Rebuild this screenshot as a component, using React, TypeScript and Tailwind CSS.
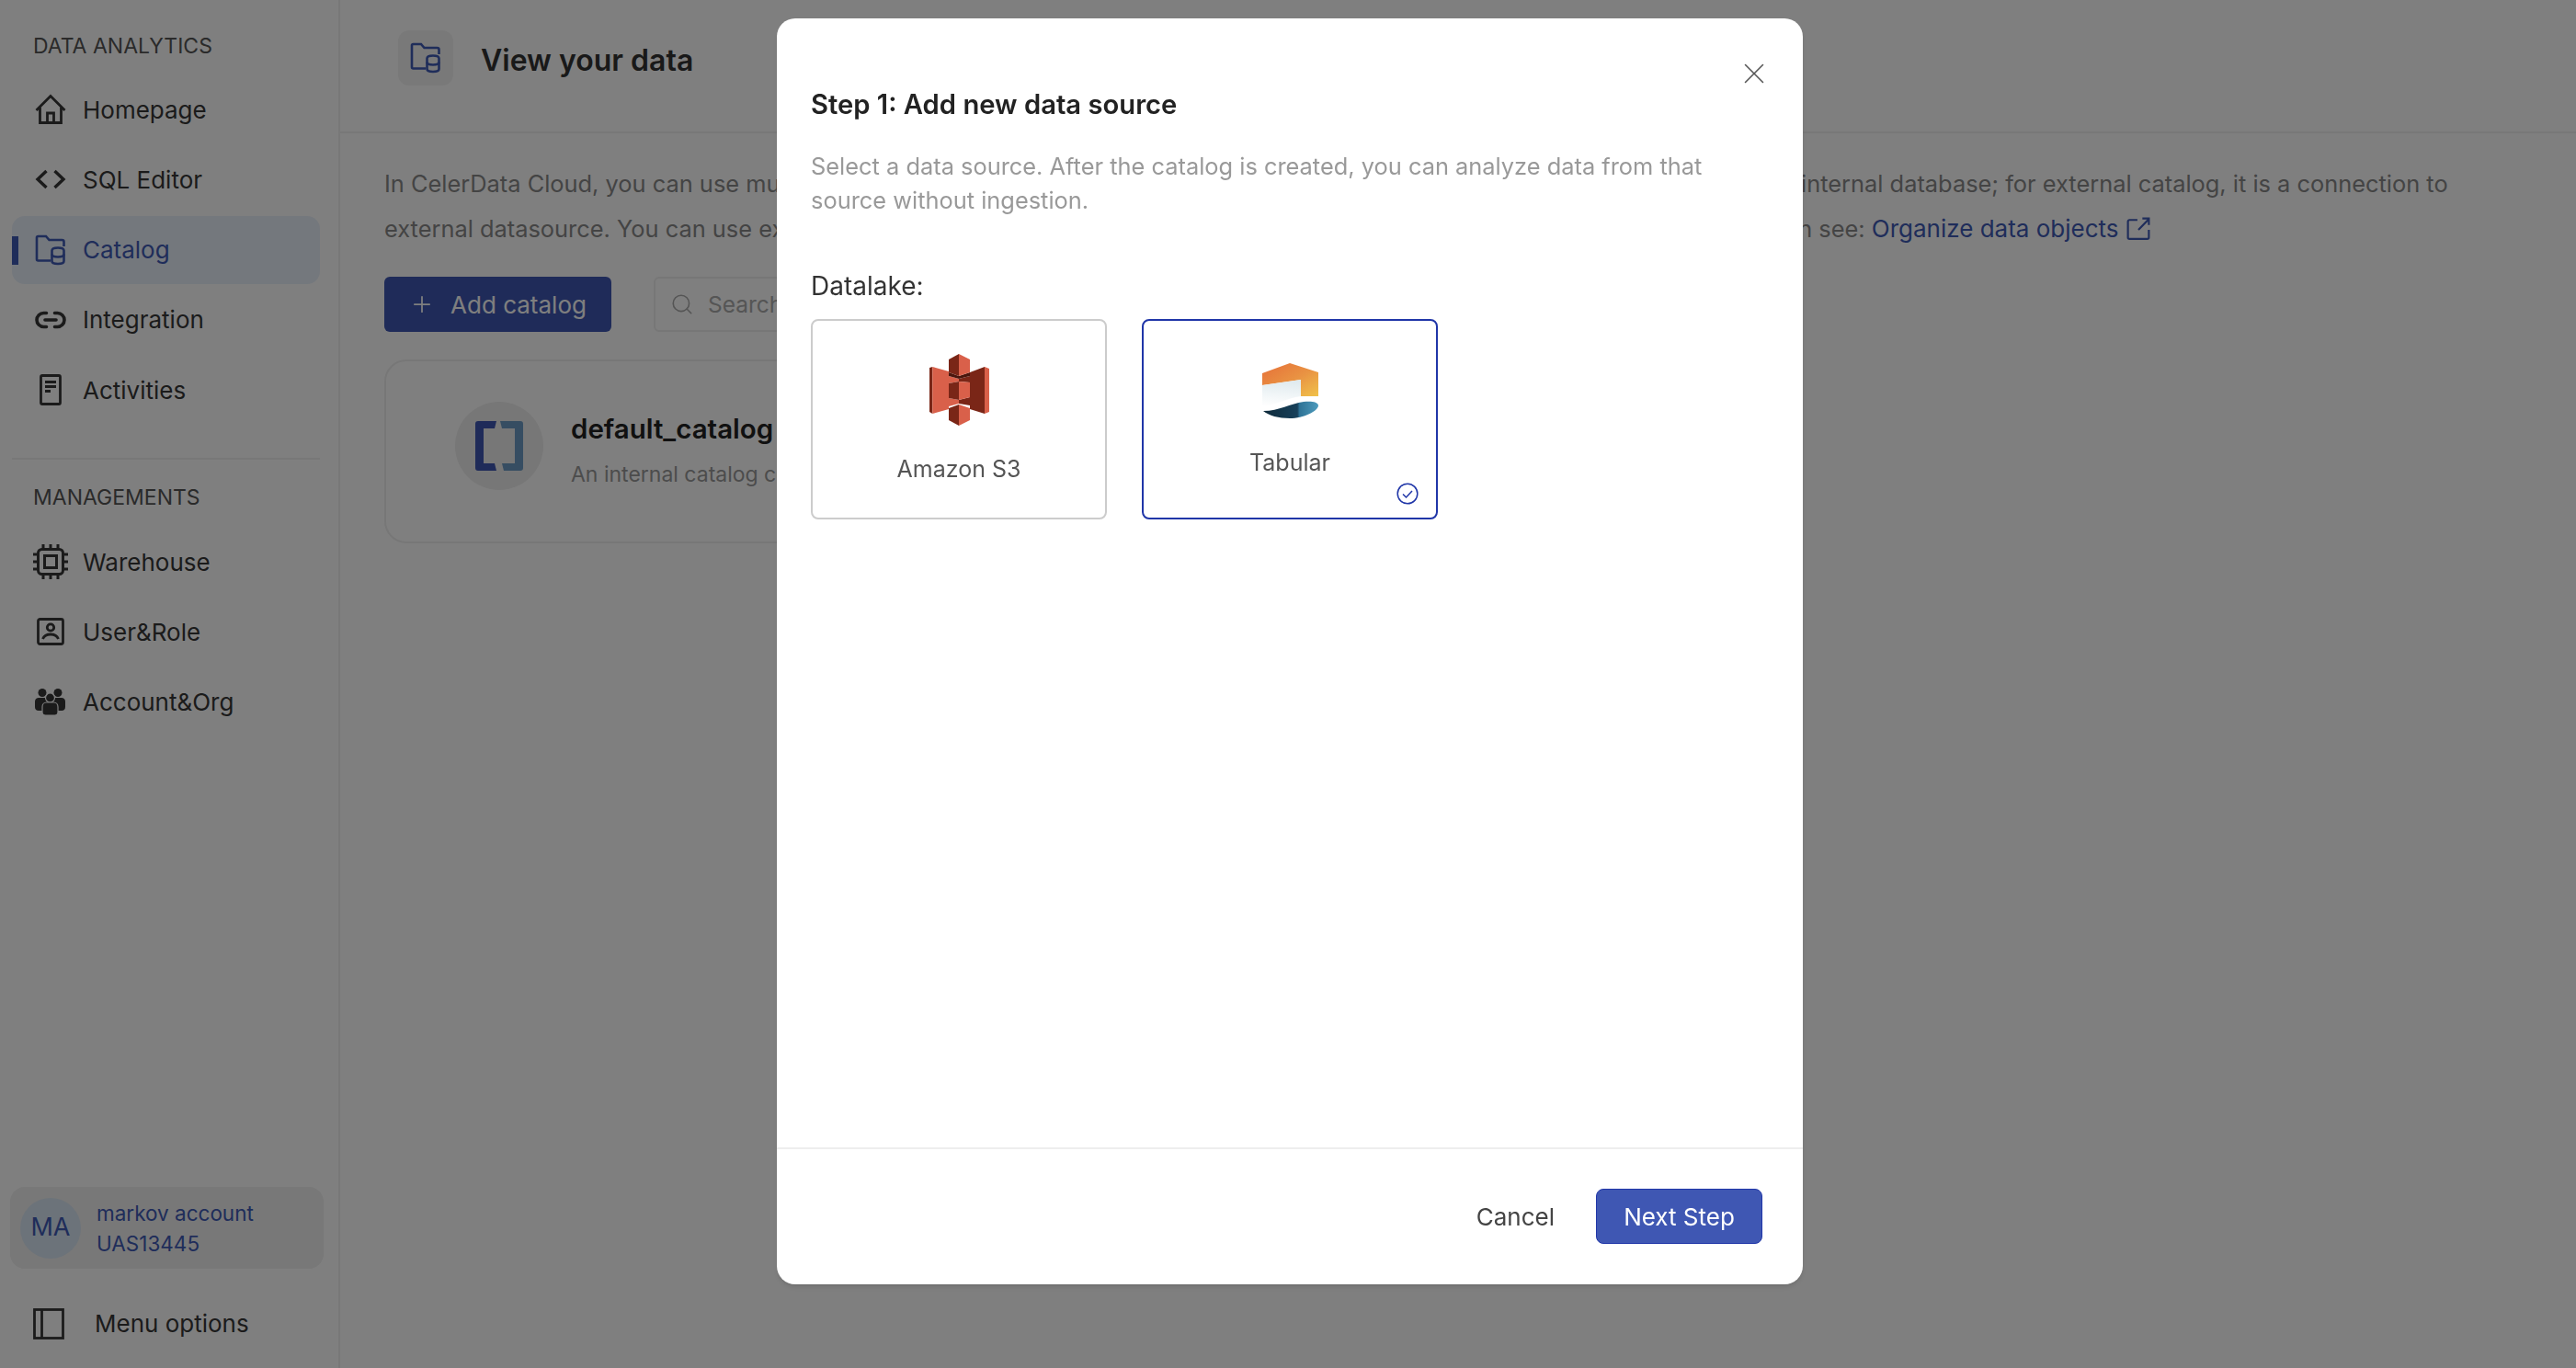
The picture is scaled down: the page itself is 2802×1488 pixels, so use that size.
import { Link2, Plus, Search, X } from 'lucide-react';
import type { ReactNode } from 'react';

function HomeIcon() {
  return (
    <svg viewBox="0 0 34 34" className="h-[34px] w-[34px]" fill="none" stroke="currentColor" strokeWidth="2.8">
      <path d="M1.500 18 17 2.500 32.500 18" />
      <path d="M5.500 15v16.500h23V15" />
      <path d="M13.500 31.500V21h7v10.500" />
    </svg>
  );
}

function CodeIcon() {
  return (
    <svg viewBox="0 0 34 34" className="h-[34px] w-[34px]" fill="none" stroke="currentColor" strokeWidth="3.400">
      <path d="M12.500 8 3 17l9.500 9" />
      <path d="M21.500 8 31 17l-9.500 9" />
    </svg>
  );
}

function CatalogIcon() {
  return (
    <svg viewBox="0 0 34 34" className="h-[34px] w-[34px]" fill="none" stroke="currentColor" strokeWidth="2.600">
      <path d="M17 28.500H3.500A1.500 1.500 0 0 1 2 27V3.500A1.500 1.500 0 0 1 3.500 2h8.500l3.500 4h14a2 2 0 0 1 2 2v5" />
      <path d="M18.500 17.500c0-1.800 3-3 6.500-3s6.500 1.200 6.500 3v11.500c0 1.800-3 3-6.500 3s-6.500-1.200-6.500-3z" />
      <path d="M18.500 21.500c0 1.800 3 3 6.500 3s6.500-1.200 6.500-3" />
    </svg>
  );
}

function ActivitiesIcon() {
  return (
    <svg viewBox="0 0 34 34" className="h-[34px] w-[34px]" fill="none" stroke="currentColor" strokeWidth="2.800">
      <rect x="6.500" y="1.500" width="21" height="31" rx="1.500" />
      <path d="M11 8.500h12M11 13.500h12M11 18.500h6" />
    </svg>
  );
}

function ChipIcon() {
  return (
    <svg viewBox="0 0 40 40" className="h-[40px] w-[40px] shrink-0" fill="none" stroke="currentColor" strokeWidth="3">
      <rect x="6.500" y="6.500" width="27" height="27" rx="4" />
      <rect x="13.500" y="13.500" width="13" height="13" />
      <path d="M12 1v5M20 1v5M28 1v5M12 34v5M20 34v5M28 34v5M1 12h5M1 20h5M1 28h5M34 12h5M34 20h5M34 28h5" />
    </svg>
  );
}

function UserRoleIcon() {
  return (
    <svg viewBox="0 0 30 30" className="h-[30px] w-[30px]" fill="none" stroke="currentColor" strokeWidth="2.800">
      <rect x="1.500" y="1.500" width="27" height="27" rx="2" />
      <circle cx="15" cy="10.500" r="3.700" />
      <path d="M6.500 23c1.500-3.500 4.500-5 8.500-5s7 1.500 8.500 5" />
    </svg>
  );
}

function GroupIcon() {
  return (
    <svg viewBox="0 0 33 29" className="h-[29px] w-[33px]" fill="currentColor">
      <circle cx="8" cy="4.500" r="4.500" />
      <circle cx="25" cy="4.500" r="4.500" />
      <path d="M0 14c0-2.500 2-4 4-4h7c2 0 3 1.500 3 4v10H4c-2.500 0-4-1.500-4-4z" />
      <path d="M33 14c0-2.500-2-4-4-4h-7c-2 0-3 1.500-3 4v10h10c2.500 0 4-1.500 4-4z" />
      <circle cx="16.500" cy="10" r="5" stroke="#ffffff" strokeWidth="1.200" />
      <path stroke="#ffffff" strokeWidth="1.200" d="M8 20c0-3 2-5 4.500-5h8c2.500 0 4.500 2 4.500 5v5.500c0 2-1.500 3.500-3.500 3.500h-10C9.500 29 8 27.500 8 25.500z" />
    </svg>
  );
}

function PanelIcon() {
  return (
    <svg viewBox="0 0 34 34" className="h-[34px] w-[34px]" fill="none" stroke="currentColor" strokeWidth="2.800">
      <rect x="1.500" y="1.500" width="31" height="31" />
      <path d="M9.500 1.500v31" />
    </svg>
  );
}

function S3Logo() {
  const dark = '#7a2617';
  const coral = '#d9604a';
  return (
    <svg viewBox="0 0 65 78" className="h-[78px] w-[65px]">
      <polygon fill={dark} points="0,15 3.300,14 3.300,65 0,63" />
      <polygon fill={coral} points="3.300,14 21,19 21,24 32,27 32,30 21,32 21,48 32,50 32,54 21,57 21,60 3.300,65" />
      <polygon fill={dark} points="44,20 60,14 60,65 44,60 44,56 32,54 32,50 44,47 44,31 32,30 32,27 44,24" />
      <polygon fill={coral} points="60,14 65,16 65,63 60,65" />
      <polygon fill="#4a160d" points="21,20 32,24 44,20 44,24 32,27 21,24" />
      <polygon fill={dark} points="21,32 32,30 32,50 21,48" />
      <polygon fill={coral} points="32,30 44,31 44,47 32,50" />
      <polygon fill={dark} points="21,6 32,0 32,24 21,20" />
      <polygon fill={coral} points="32,0 44,6 44,20 32,24" />
      <polygon fill={dark} points="21,59 32,55 32,78 21,72" />
      <polygon fill={coral} points="32,55 44,59 44,72 32,78" />
    </svg>
  );
}

function TabularLogo() {
  return (
    <svg viewBox="0 0 61 60" className="h-[60px] w-[61px]">
      <defs>
        <linearGradient id="tabOrange" x1="0" y1="0" x2="1" y2="1">
          <stop offset="0" stopColor="#e66f38" />
          <stop offset="0.55" stopColor="#e99443" />
          <stop offset="1" stopColor="#f0c24a" />
        </linearGradient>
        <linearGradient id="tabPale" x1="0.5" y1="0" x2="0.4" y2="1">
          <stop offset="0" stopColor="#dfeaee" />
          <stop offset="1" stopColor="#ffffff" />
        </linearGradient>
        <linearGradient id="tabBlue" x1="0" y1="0" x2="1" y2="0">
          <stop offset="0" stopColor="#0e2a3a" />
          <stop offset="0.62" stopColor="#17405a" />
          <stop offset="0.66" stopColor="#2f7396" />
          <stop offset="1" stopColor="#4d9bbd" />
        </linearGradient>
      </defs>
      <path fill="url(#tabOrange)" d="M0 11 30 0l31 10v26H42V18L0 24z" />
      <path fill="url(#tabPale)" d="M0 24 42 18v18C26 38 14 46 0 48z" />
      <path fill="url(#tabBlue)" d="M1 52c18 0 29-8 44-10 8-1 16 0 16 4 0 6-16 14-31 14-12 0-23-3-29-8z" />
    </svg>
  );
}

function NavItem({ icon, label, active }: { icon: ReactNode; label: string; active?: boolean }) {
  return (
    <div
      className={
        active
          ? 'relative flex h-[74px] items-center rounded-[14px] bg-[#e9f0fa] pl-[23px] text-[#3f5ab5]'
          : 'flex h-[74px] items-center pl-[23px] text-[#373737]'
      }
    >
      {active && <div className="absolute left-0 top-[22px] h-[31px] w-[7px] bg-[#3f5ab5]" />}
      <div className="flex w-[37px] justify-center">{icon}</div>
      <span className="ml-[17px] text-[26px]">{label}</span>
    </div>
  );
}

function SourceCard({ selected, children }: { selected?: boolean; children: ReactNode }) {
  return (
    <div
      className={
        selected
          ? 'relative flex h-[218px] w-[322px] flex-col items-center rounded-[8px] border-2 border-[#2036a8]'
          : 'relative flex h-[218px] w-[322px] flex-col items-center rounded-[8px] border-2 border-[#cccccc]'
      }
    >
      {children}
    </div>
  );
}

export default function App() {
  return (
    <div className="relative flex h-screen overflow-hidden bg-white font-[Inter,sans-serif]">
      {/* Sidebar */}
      <aside className="flex w-[370px] shrink-0 flex-col border-r-2 border-[#f0f0f0] pl-[13px] pr-[20px]">
        <div className="pl-[23px] pt-[37px] text-[23px] leading-[27px] text-[#555555]">DATA ANALYTICS</div>
        <nav className="mt-[18px] flex flex-col gap-[2.300px]">
          <NavItem icon={<HomeIcon />} label="Homepage" />
          <NavItem icon={<CodeIcon />} label="SQL Editor" />
          <NavItem icon={<CatalogIcon />} label="Catalog" active />
          <NavItem icon={<Link2 size={36} strokeWidth={2.400} />} label="Integration" />
          <NavItem icon={<ActivitiesIcon />} label="Activities" />
        </nav>
        <div className="mt-[37px] h-[2px] bg-[#f0f0f0]" />
        <div className="mt-[28px] pl-[23px] text-[23px] leading-[27px] text-[#555555]">MANAGEMENTS</div>
        <nav className="mt-[19px] flex flex-col gap-[2.300px]">
          <NavItem icon={<ChipIcon />} label="Warehouse" />
          <NavItem icon={<UserRoleIcon />} label="User&Role" />
          <NavItem icon={<GroupIcon />} label="Account&Org" />
        </nav>
        <div className="mt-auto -ml-[2px] -mr-[4px] flex h-[89px] items-center rounded-[16px] bg-[#f0f0f0] pl-[11px]">
          <div className="flex h-[66px] w-[66px] items-center justify-center rounded-full bg-[#d8e6f4] text-[27px] text-[#3f5ab5]">
            MA
          </div>
          <div className="ml-[17px] text-[22.500px] leading-[33px] text-[#3f5ab5]">
            <div>markov account</div>
            <div>UAS13445</div>
          </div>
        </div>
        <div className="mb-[31px] mt-[43px] flex items-center pl-[23px] text-[#373737]">
          <PanelIcon />
          <span className="ml-[33px] text-[26px] leading-[34px]">Menu options</span>
        </div>
      </aside>

      {/* Main */}
      <main className="min-w-0 flex-1">
        <header className="flex h-[145px] items-start border-b-2 border-[#f0f0f0] pl-[63px] pt-[33px]">
          <div className="flex h-[60px] w-[60px] items-center justify-center rounded-[12px] bg-[#f2f2f2] text-[#3f5ab5]">
            <CatalogIcon />
          </div>
          <h1 className="ml-[30px] mt-[13px] text-[32px] font-semibold leading-[40px] text-[#333333]">View your data</h1>
        </header>
        <div className="pl-[48px] pr-[60px]">
          <p className="mt-[30px] whitespace-nowrap text-[25.400px] leading-[49px] text-[#888888]">
            In CelerData Cloud, you can use multiple catalogs to manage all of your data sets all in one place. For an internal catalog, it is an internal database; for external catalog, it is a connection to
            <br />
            external datasource. You can use external catalogs to query data directly without any ingestion at all. To learn more here, you can see:{' '}
            <span className="text-[26px] text-[#3f5ab5]">Organize data objects</span>
            <svg viewBox="0 0 24 24" className="ml-[8px] inline h-[26px] w-[26px] align-[-4px] text-[#3f5ab5]" fill="none" stroke="currentColor" strokeWidth="2">
              <path d="M11 3H3a1.500 1.500 0 0 0-1.500 1.500v16A1.500 1.500 0 0 0 3 22h18a1.500 1.500 0 0 0 1.500-1.500V13" />
              <path d="M12 13 22.500 2M16 1.500h6.500V8" />
            </svg>
          </p>
          <div className="mt-[28px] flex items-center gap-[46px]">
            <button className="flex h-[60px] w-[247px] items-center justify-center gap-[17px] rounded-[6px] bg-[#3f57b3] text-[26px] text-white">
              <Plus size={28} strokeWidth={1.500} />
              Add catalog
            </button>
            <div className="flex h-[60px] w-[500px] items-center rounded-[6px] border-2 border-[#eeeeee] pl-[16px] text-[#aaaaaa]">
              <Search size={26} strokeWidth={1.500} />
              <span className="ml-[15px] text-[24.500px]">Search</span>
            </div>
          </div>
          <div className="mt-[30px] flex h-[200px] w-[1200px] items-center rounded-[24px] border-2 border-[#eeeeee] pb-[12px] pl-[75px]">
            <div className="flex h-[96px] w-[96px] items-center justify-center rounded-full bg-[#eeeeee]">
              <svg viewBox="0 0 52 54" className="h-[54px] w-[52px]">
                <path fill="#3f57b3" d="M3 0h20l-2 8H9v38h12l2 8H3a3 3 0 0 1-3-3V3a3 3 0 0 1 3-3z" />
                <path fill="#6d9bc4" d="M27 0h22a3 3 0 0 1 3 3v48a3 3 0 0 1-3 3H31l-2-8h14V8H29z" />
              </svg>
            </div>
            <div className="ml-[30px] mt-[7px]">
              <div className="text-[29.500px] font-semibold leading-[36px] text-[#222222]">default_catalog</div>
              <div className="mt-[18px] text-[23px] leading-[28px] text-[#999999]">An internal catalog contains your data</div>
            </div>
          </div>
        </div>
      </main>

      {/* Dialog */}
      <div className="fixed inset-0 bg-black/50">
        <div className="ml-[845px] mt-[20px] flex h-[1377px] w-[1116px] flex-col rounded-[20px] bg-white shadow-md">
          <div className="relative flex-1 px-[37px] pt-[74px]">
            <button className="absolute right-[34px] top-[41px] text-[#555555]">
              <X size={38} strokeWidth={1} />
            </button>
            <h2 className="text-[29.200px] font-semibold leading-[40px] text-[#222222]">Step 1: Add new data source</h2>
            <p className="mt-[28px] w-[1010px] text-[25.400px] leading-[37px] text-[#999999]">
              Select a data source. After the catalog is created, you can analyze data from that source without ingestion.
            </p>
            <div className="mt-[58px] text-[28px] leading-[34px] text-[#333333]">Datalake:</div>
            <div className="mt-[19px] flex gap-[38px]">
              <SourceCard>
                <div className="mt-[36px]">
                  <S3Logo />
                </div>
                <span className="mt-[31px] text-[25px] leading-[32px] text-[#555555]">Amazon S3</span>
              </SourceCard>
              <SourceCard selected>
                <div className="mt-[46px]">
                  <TabularLogo />
                </div>
                <span className="mt-[32px] text-[25px] leading-[32px] text-[#555555]">Tabular</span>
                <svg viewBox="0 0 24 24" className="absolute bottom-[14px] right-[19px] h-[24px] w-[24px] text-[#2036a8]" fill="none" stroke="currentColor" strokeWidth="1.500">
                  <circle cx="12" cy="12" r="10.800" />
                  <path d="m7 12.500 3.500 3.500L17 9" />
                </svg>
              </SourceCard>
            </div>
          </div>
          <div className="flex h-[149px] items-start justify-end border-t-2 border-[#eeeeee] pr-[44px] pt-[43px]">
            <button className="mr-[45px] h-[60px] text-[26px] text-[#444444]">Cancel</button>
            <button className="h-[60px] w-[181px] rounded-[8px] border border-[#2036a8] bg-[#3f57b3] text-[26px] text-white">Next Step</button>
          </div>
        </div>
      </div>
    </div>
  );
}
